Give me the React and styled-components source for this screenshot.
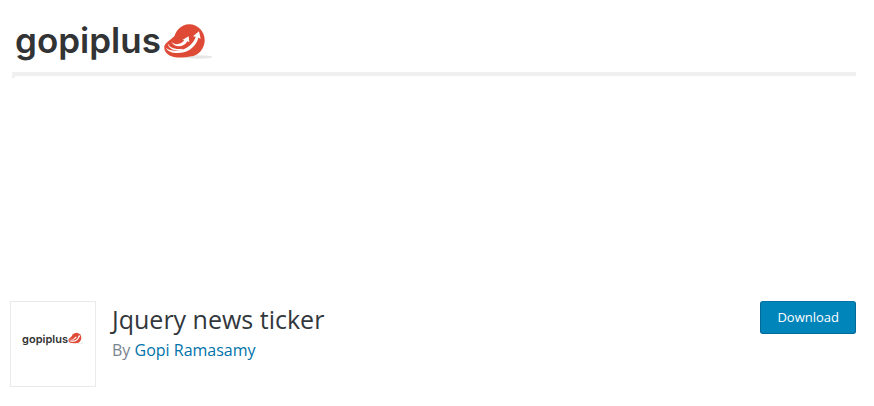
import React from 'react';
import styled, {createGlobalStyle} from 'styled-components';

const GlobalStyle=createGlobalStyle`
    body {
        margin: 0;
        background: #fff;
        color: #32373c;
        font-family: "Open Sans", sans-serif;
    }
`;

const Page=styled.main`
    padding: 16px 18px 16px 10px;
`;

const Banner=styled.div`
    height: 285px;
    padding-left: 2px;
`;

const BannerTop=styled.div`
    height: 56px;
    padding-left: 3px;
    box-sizing: border-box;
`;

const BannerFrame=styled.div`
    height: 2px;
    border-top: 4px solid #f0f0f0;
    border-left: 3px solid #f0f0f0;
`;

const Brand=styled.div`
    display: flex;
    align-items: flex-start;
    color: #323334;
    font-family: Inter, sans-serif;
    font-weight: 600;
    font-size: ${p=>p.$small ? 11 : 35}px;
    line-height: ${p=>p.$small ? 16 : 48}px;
`;

const Mark=styled.svg`
    width: ${p=>p.$small ? 16 : 50}px;
    height: ${p=>p.$small ? 12 : 36}px;
    margin-top: ${p=>p.$small ? 1 : 7}px;
    margin-left: ${p=>p.$small ? 0 : 2}px;
`;

const Header=styled.header`
    display: flex;
    align-items: flex-start;
    gap: 16px;
`;

const Thumb=styled.div`
    display: flex;
    align-items: center;
    justify-content: center;
    box-sizing: border-box;
    width: 86px;
    height: 86px;
    padding-bottom: 10px;
    border: 1px solid #eaeaea;
`;

const Info=styled.div`
    flex: 1;
`;

const Title=styled.h1`
    margin: 0;
    font-size: 25px;
    font-weight: 400;
    line-height: 37px;
`;

const Byline=styled.div`
    color: #78848f;
    font-size: 16px;
    line-height: 24px;
`;

const Author=styled.a`
    color: #0073aa;
    text-decoration: none;
`;

const Download=styled.button`
    height: 33px;
    padding: 0 16px 2px;
    border: 1px solid;
    border-color: #0073aa #006799 #006799;
    border-radius: 3px;
    background: #0085ba;
    color: #fff;
    font-family: inherit;
    font-size: 13px;
    cursor: pointer;
`;

const Logo=({small})=>(
    <Brand $small={small}>
        <span>gopiplus</span>
        <Mark $small={small} viewBox="18 24 150 108" aria-hidden="true">
            <ellipse cx="122" cy="126" rx="44" ry="5" fill="#e6e6e6" />
            <ellipse cx="97" cy="76" rx="46" ry="48" fill="#de4a35" />
            <path fill="#de4a35" d="M54 62C36 78 24 84 22 94C20 110 32 122 50 126C74 130 104 126 118 116L94 76Z" />
            {/* outer arrow with its split tail */}
            <path fill="#fff" d="M26 98C42 112 80 110 100 90C109 81 113 74 116 65L108 64L126 49L131 71L124 68C120 86 105 104 84 111C60 118 34 114 26 98Z" />
            <path fill="#fff" d="M32 85C38 99 56 105 78 101L72 106C50 109 34 101 32 85Z" />
            {/* inner arrow */}
            <path fill="#fff" d="M42 78C50 91 69 91 82 76L76 75L95 64L97 82L91 79C80 99 50 99 42 78Z" />
        </Mark>
    </Brand>
);

export default ()=>{
    return (
        <>
            <GlobalStyle />
            <Page>
                <Banner>
                    <BannerTop>
                        <Logo />
                    </BannerTop>
                    <BannerFrame />
                </Banner>
                <Header>
                    <Thumb>
                        <Logo small />
                    </Thumb>
                    <Info>
                        <Title>Jquery news ticker</Title>
                        <Byline>By <Author href="#author">Gopi Ramasamy</Author></Byline>
                    </Info>
                    <Download type="button">Download</Download>
                </Header>
            </Page>
        </>
    );
}
